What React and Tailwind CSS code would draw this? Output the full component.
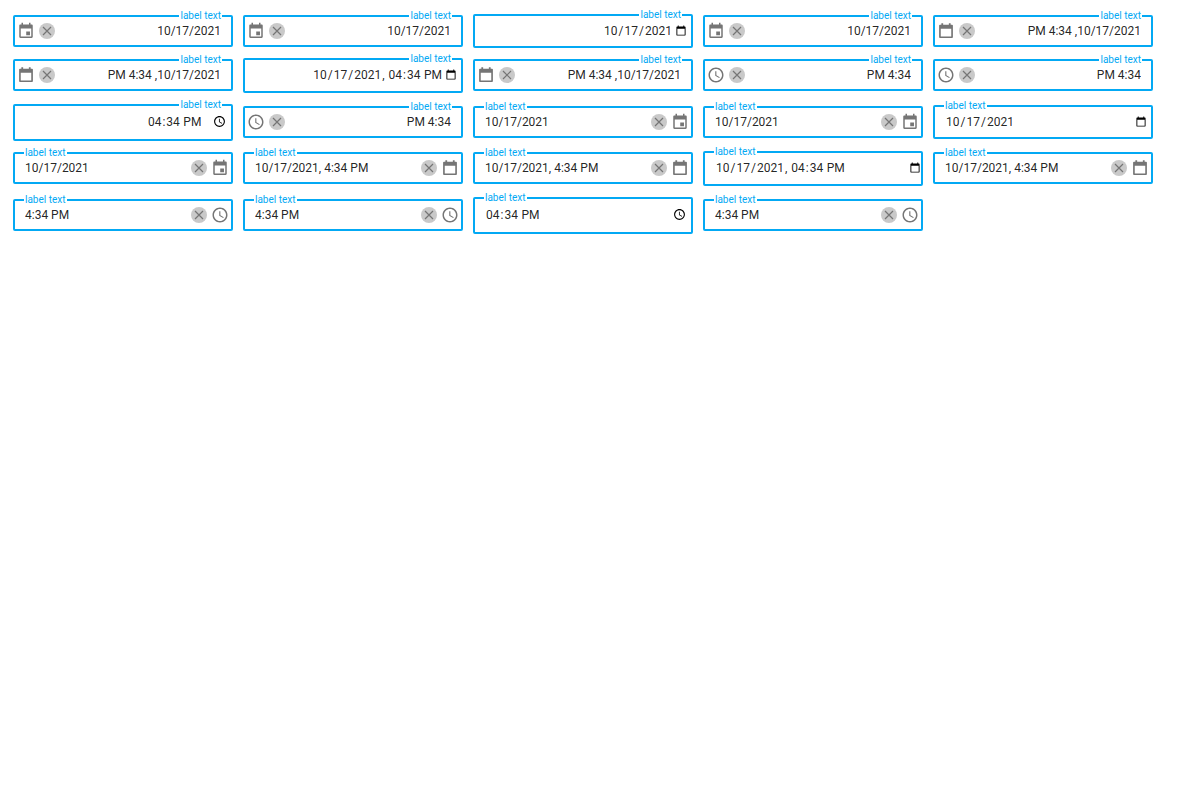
import React, { useId, useState } from "react";

const EventIcon = () => (
  <svg viewBox="0 0 24 24" className="size-[18px] fill-current" aria-hidden="true">
    <path d="M17.3 12.5h-5v5h5v-5zM16 1v2.3H8V1H6v2.3H4.5c-.9 0-1.5.6-1.5 1.5v15c0 .9.6 1.5 1.5 1.5h15c.9 0 1.5-.6 1.5-1.5v-15c0-.9-.6-1.5-1.5-1.5H18V1h-2zm3 18.3H5V8.6h14v10.7z" />
  </svg>
);

const CalendarIcon = () => (
  <svg viewBox="0 0 24 24" className="size-[18px] fill-current" aria-hidden="true">
    <path d="M15.8 1.6v2.1H8.2V1.6H5.8v2.1H4c-.7 0-1.2.4-1.2 1v15.6c0 .6.5 1.1 1.2 1.1h16c.7 0 1.2-.5 1.2-1.1V4.7c0-.6-.5-1-1.2-1h-1.8V1.6h-2.4zm3.2 17.8H5V8.9h14v10.5z" />
  </svg>
);

const ClockIcon = () => (
  <svg viewBox="0 0 24 24" className="size-[18px] fill-current" aria-hidden="true">
    <path d="M11.99 2C6.47 2 2 6.48 2 12s4.47 10 9.99 10C17.52 22 22 17.52 22 12S17.52 2 11.99 2zM12 20c-4.42 0-8-3.58-8-8s3.58-8 8-8 8 3.58 8 8-3.58 8-8 8zm.5-13H11v6l5.25 3.15.75-1.23-4.5-2.67z" />
  </svg>
);

const icons = { date: EventIcon, datetime: CalendarIcon, time: ClockIcon };
const pickerNames = { date: "Choose date", datetime: "Choose date and time", time: "Choose time" };
const texts = { date: "10/17/2021", datetime: "10/17/2021, 4:34 PM", time: "4:34 PM" };

function FieldLabel({ htmlFor }) {
  return (
    <label
      htmlFor={htmlFor}
      className="absolute -top-[7px] start-[9px] bg-white px-px text-[10px] leading-3 text-[#03a9f4]"
    >
      label text
    </label>
  );
}

function DateBox({ kind, rtl }) {
  const id = useId();
  const [value, setValue] = useState(texts[kind]);
  const Icon = icons[kind];
  return (
    <div
      dir={rtl ? "rtl" : "ltr"}
      className="relative flex h-8 items-center rounded-xs border-2 border-[#03a9f4] pe-[2px]"
    >
      <FieldLabel htmlFor={id} />
      <input
        id={id}
        type="text"
        value={value}
        onChange={(e) => setValue(e.target.value)}
        className="h-7 min-w-0 flex-1 bg-transparent ps-[10px] text-xs outline-none"
      />
      <button
        type="button"
        aria-label="Clear"
        onClick={() => setValue("")}
        className="me-1 flex size-4 items-center justify-center rounded-full bg-[#c9c9c9] text-[#757575]"
      >
        <svg viewBox="0 0 16 16" className="size-4 fill-none stroke-current" aria-hidden="true">
          <path d="M4 4l8 8M12 4l-8 8" strokeWidth="1.2" />
        </svg>
      </button>
      <button type="button" aria-label={pickerNames[kind]} className="text-[#757575]">
        <Icon />
      </button>
    </div>
  );
}

const natives = {
  date: {
    type: "date",
    value: "2021-10-17",
    box: "h-[34px]",
    start: "pe-[2px]",
    end: "pe-[2px] [&::-webkit-calendar-picker-indicator]:ms-0",
  },
  datetime: {
    type: "datetime-local",
    value: "2021-10-17T16:34",
    box: "h-[35px] pb-[2px]",
    start: "-me-[2px]",
    end: "pe-[2px] [&::-webkit-calendar-picker-indicator]:ms-0",
  },
  time: {
    type: "time",
    value: "16:34",
    box: "h-[37px] pb-[2px]",
    start: "pe-[2px]",
    end: "pe-[2px] [&::-webkit-calendar-picker-indicator]:ms-2",
  },
};

function NativeBox({ kind, rtl }) {
  const id = useId();
  const n = natives[kind];
  const [value, setValue] = useState(n.value);
  const align = rtl
    ? `${n.end} [&::-webkit-datetime-edit]:flex [&::-webkit-datetime-edit]:justify-end`
    : n.start;
  return (
    <div
      className={`relative flex items-center rounded-xs border-2 border-[#03a9f4] ${n.box}`}
    >
      <div dir={rtl ? "rtl" : "ltr"} className="absolute inset-x-0 top-0">
        <FieldLabel htmlFor={id} />
      </div>
      <input
        id={id}
        type={n.type}
        value={value}
        onChange={(e) => setValue(e.target.value)}
        className={`min-w-0 flex-1 bg-transparent ps-[10px] text-xs outline-none ${align}`}
      />
    </div>
  );
}

const rows = [
  ["date rtl", "date rtl", "date rtl native", "date rtl", "datetime rtl"],
  ["datetime rtl", "datetime rtl native", "datetime rtl", "time rtl", "time rtl"],
  ["time rtl native", "time rtl", "date", "date", "date native"],
  ["date", "datetime", "datetime", "datetime native", "datetime"],
  ["time", "time", "time native", "time"],
];

const rowHeights = ["min-h-[34px]", "min-h-9", "min-h-[37px]", "min-h-9", "min-h-[37px]"];

export default function App() {
  return (
    <main className="flex flex-col gap-[10px] bg-white px-[13px] py-[14px] font-['Roboto',sans-serif] text-black/87">
      {rows.map((row, i) => (
        <div key={i} className={`flex items-baseline gap-[10px] ${rowHeights[i]}`}>
          {row.map((spec, j) => {
            const [kind, ...flags] = spec.split(" ");
            const Box = flags.includes("native") ? NativeBox : DateBox;
            return (
              <div key={j} className="w-[220px] shrink-0">
                <Box kind={kind} rtl={flags.includes("rtl")} />
              </div>
            );
          })}
        </div>
      ))}
    </main>
  );
}
